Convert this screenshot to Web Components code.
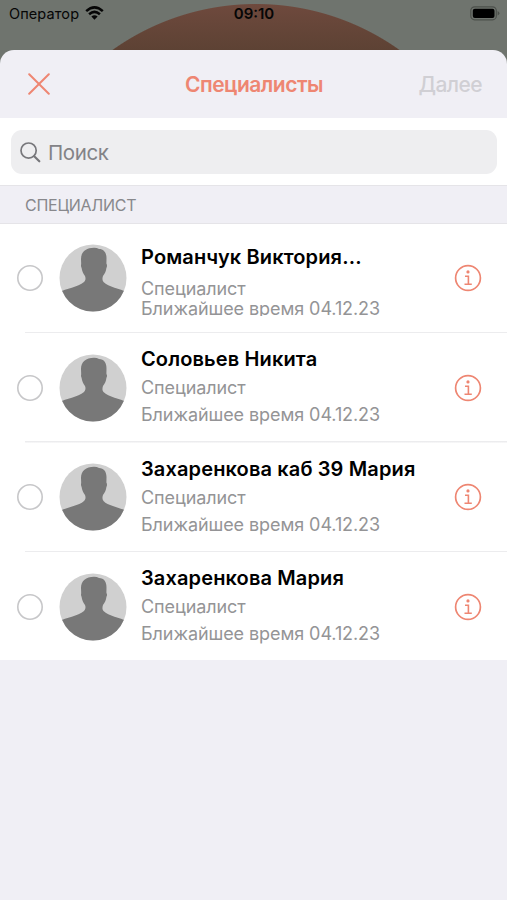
<!DOCTYPE html>
<html lang="ru">
<head>
<meta charset="utf-8">
<title>Специалисты</title>
<style>
html, body { margin: 0; height: 100%; overflow: hidden; }
body { font-family: Inter, "Liberation Sans", sans-serif; background: #f0eff5; }
</style>
</head>
<body>
<app-screen>
  <status-bar slot="status" carrier="Оператор" time="09:10"></status-bar>
  <nav-header><span slot="title">Специалисты</span><span slot="action">Далее</span></nav-header>
  <search-field>Поиск</search-field>
  <section-title>СПЕЦИАЛИСТ</section-title>
  <specialist-row compact><span slot="name">Романчук Виктория...</span><span slot="role">Специалист</span><span slot="time">Ближайшее время 04.12.23</span></specialist-row>
  <specialist-row><span slot="name">Соловьев Никита</span><span slot="role">Специалист</span><span slot="time">Ближайшее время 04.12.23</span></specialist-row>
  <specialist-row><span slot="name">Захаренкова каб 39 Мария</span><span slot="role">Специалист</span><span slot="time">Ближайшее время 04.12.23</span></specialist-row>
  <specialist-row last><span slot="name">Захаренкова Мария</span><span slot="role">Специалист</span><span slot="time">Ближайшее время 04.12.23</span></specialist-row>
</app-screen>
<script>
const define = (name, html, setup) => {
  customElements.define(name, class extends HTMLElement {
    constructor() {
      super();
      this.attachShadow({ mode: 'open' }).innerHTML = html;
    }
    connectedCallback() { if (setup) setup(this, this.shadowRoot); }
  });
};

define('app-screen', `
<style>
:host { display: flex; flex-direction: column; width: 507px; height: 900px; overflow: hidden;
  background: radial-gradient(circle 247px at 256px 251px, transparent 246.5px, #6f746e 247.5px) , linear-gradient(#704a3e, #5d4234 50px); }
.sheet { flex: 1; display: flex; flex-direction: column; background: #f0eff5; border-radius: 14px 14px 0 0; overflow: hidden; }
</style>
<slot name="status"></slot>
<div class="sheet"><slot></slot></div>`);

define('status-bar', `
<style>
:host { display: grid; grid-template-columns: 1fr auto 1fr; height: 50px; box-sizing: border-box; padding: 4px 7px 0 9px; align-items: start; color: #060606; font-size: 14.5px; line-height: 20px; }
.left { display: flex; gap: 6px; letter-spacing: .1px; }
.time { font-weight: 600; font-size: 15px; margin-left: -1px; }
.battery { justify-self: end; margin-top: 2px; }
svg { display: block; }
.wifi { margin-top: 2px; }
</style>
<div class="left"><span class="carrier"></span>
<svg class="wifi" width="19" height="14" viewBox="0 0 19 14" fill="none" stroke="#060606" stroke-width="2.5"><path d="M1.2 5.2Q9.5-2.5 17.8 5.2M4.1 8.3Q9.5 3.5 14.9 8.3"/><path d="M6.4 10.6Q9.5 8 12.6 10.6L9.5 13.7Z" fill="#060606" stroke="none"/></svg></div>
<span class="time"></span>
<svg class="battery" width="30" height="15" viewBox="0 0 30 15"><rect x=".8" y=".8" width="25.5" height="13" rx="3.8" fill="none" stroke="#4c504b" stroke-width="1.2"/><rect x="2.8" y="2.7" width="21.7" height="9.2" rx="2" fill="#000"/><path d="M27.6 5.1Q29.4 5.9 29.4 7.3T27.6 9.5Z" fill="#4c504b"/></svg>`,
(el, root) => {
  root.querySelector('.carrier').textContent = el.getAttribute('carrier');
  root.querySelector('.time').textContent = el.getAttribute('time');
});

define('nav-header', `
<style>
:host { display: grid; grid-template-columns: 1fr auto 1fr; align-items: center; height: 68px; flex: none; padding: 0 25px 0 28px; font-size: 21px; line-height: 28px; }
svg { display: block; }
.title { color: #ee8672; font-weight: 600; margin: 2px 0 0 -2px; letter-spacing: -.5px; }
.action { justify-self: end; color: #d0cfd4; font-weight: 500; margin-top: 2px; letter-spacing: -.6px; }
</style>
<svg width="22" height="22" viewBox="0 0 22 22" stroke="#ee8672" stroke-width="2" stroke-linecap="round"><path d="M1.2 1.2L20.8 20.8M20.8 1.2L1.2 20.8"/></svg>
<div class="title"><slot name="title"></slot></div>
<div class="action"><slot name="action"></slot></div>`);

define('search-field', `
<style>
:host { display: block; flex: none; height: 67px; box-sizing: border-box; background: #fff; padding: 12px 10px 0 11px; }
.box { display: flex; align-items: center; gap: 7px; height: 44px; box-sizing: border-box; padding: 0 9px; border-radius: 11px; background: #eeeef0; color: #838387; font-size: 20.5px; line-height: 28px; letter-spacing: -.4px; }
span { padding-top: 2px; }
</style>
<div class="box"><svg width="21" height="21" viewBox="0 0 21 21" fill="none" stroke="#77777b" stroke-linecap="round"><circle cx="8.6" cy="8.6" r="7.6" stroke-width="1.7"/><path d="M14.2 14.2L19.3 19.3" stroke-width="2.2"/></svg><span><slot></slot></span></div>`);

define('section-title', `
<style>
:host { display: flex; align-items: center; flex: none; height: 38.5px; box-sizing: border-box; padding: 2px 25px 0; border-top: 1px solid #e5e4e8; border-bottom: 1px solid #e5e4e8; background: #f0eff5; color: #88888c; font-size: 16px; line-height: 20px; letter-spacing: -.25px; }
</style><slot></slot>`);

define('specialist-row', `
<style>
:host { display: grid; grid-template-columns: 26px 68px 1fr 28px; column-gap: 16px; align-items: center; flex: none; height: 109.6px; box-sizing: border-box; padding: 0 25px .4px 17px; background: linear-gradient(#ececee, #ececee) 25px 100% / 100% 1.5px no-repeat #fff; }
:host([last]) { background: #fff; height: 108.2px; padding-bottom: 0; padding-top: .8px; }
svg { display: block; }
.text { padding-bottom: 2px; margin-left: -2px; white-space: nowrap; color: #949496; font-size: 18px; letter-spacing: -.08px; }
.name { color: #000; font-size: 20px; font-weight: 600; line-height: 26px; letter-spacing: .13px; }
.role { line-height: 24px; margin-top: 4px; }
.time { line-height: 24px; margin-top: 3px; }
:host([compact]) .text { padding: 13px 0 0; }
:host([compact]) .name { margin-bottom: 9px; }
:host([compact]) .role { line-height: 20px; margin: 0; }
:host([compact]) .time { line-height: 20px; height: 17px; margin: 0 0 9px; overflow: hidden; }
</style>
<svg width="26" height="26" viewBox="0 0 26 26"><circle cx="13" cy="13" r="12.2" fill="#fff" stroke="#c7c7c9" stroke-width="1.6"/></svg>
<svg width="68" height="68" viewBox="0 0 68 68"><defs><clipPath id="c"><circle cx="34" cy="34" r="33.5"/></clipPath></defs><circle cx="34" cy="34" r="33.5" fill="#d0d0d0"/><path clip-path="url(#c)" fill="#787878" d="M0 48.5C7 44 19 43.5 25 38C26.8 36 26.8 34 26 32C24 29 23 27 22.6 24Q21.6 22 22.2 20L22 15C22 8 27 3.8 35 3.8Q38 3.8 40 5C45 5 47.8 9 47.5 15L47.4 19.5Q48.6 21.5 47.4 24C47 27 46 29.5 44 32C43.2 34.5 43.2 36.5 44.5 38C49.5 43.5 61 44 68 48.5V68H0Z"/></svg>
<div class="text"><div class="name"><slot name="name"></slot></div><div class="role"><slot name="role"></slot></div><div class="time"><slot name="time"></slot></div></div>
<svg width="28" height="28" viewBox="0 0 28 28" fill="none" stroke="#ee8672"><circle cx="14" cy="14" r="12.4" stroke-width="1.7"/><circle cx="14" cy="7.9" r="1.6" fill="#ee8672" stroke="none"/><path d="M11 12.2H14.4V20M10.5 20.2H17.8" stroke-width="1.6"/></svg>`);
</script>
</body>
</html>
